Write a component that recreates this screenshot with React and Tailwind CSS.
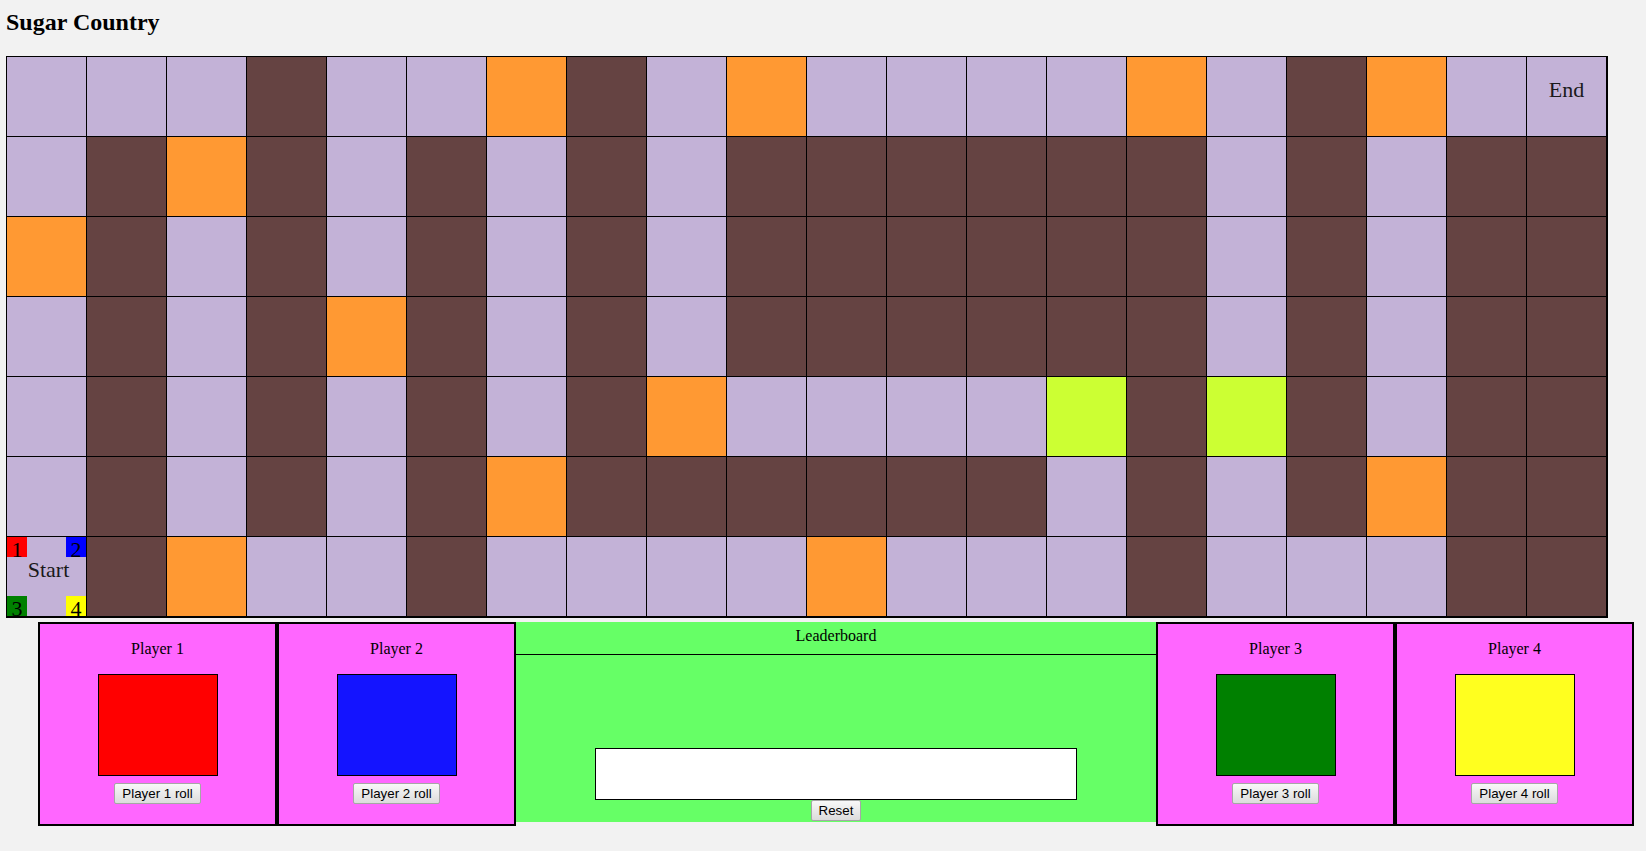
import React from "react";

const ROWS = [
  "LLLBLLOBLOLLLLOLBOLE",
  "LBOBLBLBLBBBBBBLBLBB",
  "OBLBLBLBLBBBBBBLBLBB",
  "LBLBOBLBLBBBBBBLBLBB",
  "LBLBLBLBOLLLLGBGBLBB",
  "LBLBLBOBBBBBBLBLBOBB",
  "SBOLLBLLLLOLLLBLLLBB",
];

const BG = {
  L: "bg-[#c3b2d7]",
  E: "bg-[#c3b2d7]",
  S: "bg-[#c3b2d7]",
  B: "bg-[#654342]",
  O: "bg-[#ff9933]",
  G: "bg-[#ccff33]",
};

function Corner({ cls, n }) {
  return (
    <div className={`w-[20px] h-[20px] ${cls} text-center leading-[25px] text-[22px] text-black`}>
      {n}
    </div>
  );
}

function Cell({ t }) {
  const base = `w-[80px] h-[80px] border-l border-t border-black ${BG[t]}`;
  if (t === "S") {
    return (
      <div className={`${base} flex flex-col`}>
        <div className="flex justify-between h-[20px]">
          <Corner cls="bg-[#ff0000]" n="1" />
          <Corner cls="bg-[#0000ff]" n="2" />
        </div>
        <div className="text-center pl-[4px] text-[22px] leading-[25px] text-[#1a1a1a]">Start</div>
        <div className="flex justify-between h-[20px] mt-auto">
          <Corner cls="bg-[#008000]" n="3" />
          <Corner cls="bg-[#ffff00]" n="4" />
        </div>
      </div>
    );
  }
  if (t === "E") {
    return (
      <div className={`${base} flex flex-col`}>
        <div className="h-[20px]" />
        <div className="text-center text-[22px] leading-[25px] text-[#1a1a1a]">End</div>
      </div>
    );
  }
  return <div className={base} />;
}

function RollButton({ children }) {
  return (
    <button className="h-[21px] px-[7px] border border-[#a6a6a6] rounded-[2px] bg-linear-to-b from-[#f8f8f8] to-[#dcdcdc] text-[13.33px] leading-none text-black font-['Liberation_Sans',Arial,sans-serif]">
      {children}
    </button>
  );
}

function Player({ n, color }) {
  return (
    <div className="w-[239px] h-[204px] border-2 border-black bg-[#ff66ff] flex flex-col items-center shrink-0">
      <p className="mt-[16px] text-[16px] leading-[18px] text-black">Player {n}</p>
      <div className={`mt-[16px] w-[120px] h-[102px] border border-black ${color}`} />
      <div className="mt-[5px]">
        <RollButton>Player {n} roll</RollButton>
      </div>
    </div>
  );
}

export default function App() {
  return (
    <div className="min-h-[851px] bg-[#f2f2f2] pl-[6px] pt-[8px] font-['Liberation_Serif','Times_New_Roman',serif] text-black">
      <h1 className="text-[24px] font-bold leading-[28px]">Sugar Country</h1>
      <div className="mt-[20px] w-fit border-r-2 border-b-2 border-black grid grid-cols-[repeat(20,80px)]">
        {ROWS.map((row, r) =>
          row.split("").map((t, c) => <Cell key={`${r}-${c}`} t={t} />)
        )}
      </div>
      <div className="mt-[4px] ml-[32px] flex items-start">
        <Player n={1} color="bg-[#ff0000]" />
        <Player n={2} color="bg-[#1414ff]" />
        <div className="w-[640px] h-[200px] bg-[#66ff66] flex flex-col shrink-0">
          <div className="h-[33px] border-b border-black pt-[5px] text-center text-[16px] leading-[18px]">
            Leaderboard
          </div>
          <div className="flex-1 flex flex-col items-center justify-end pb-[1px]">
            <div className="w-[482px] h-[52px] bg-white border border-black" />
            <RollButton>Reset</RollButton>
          </div>
        </div>
        <Player n={3} color="bg-[#008000]" />
        <Player n={4} color="bg-[#ffff1f]" />
      </div>
    </div>
  );
}
